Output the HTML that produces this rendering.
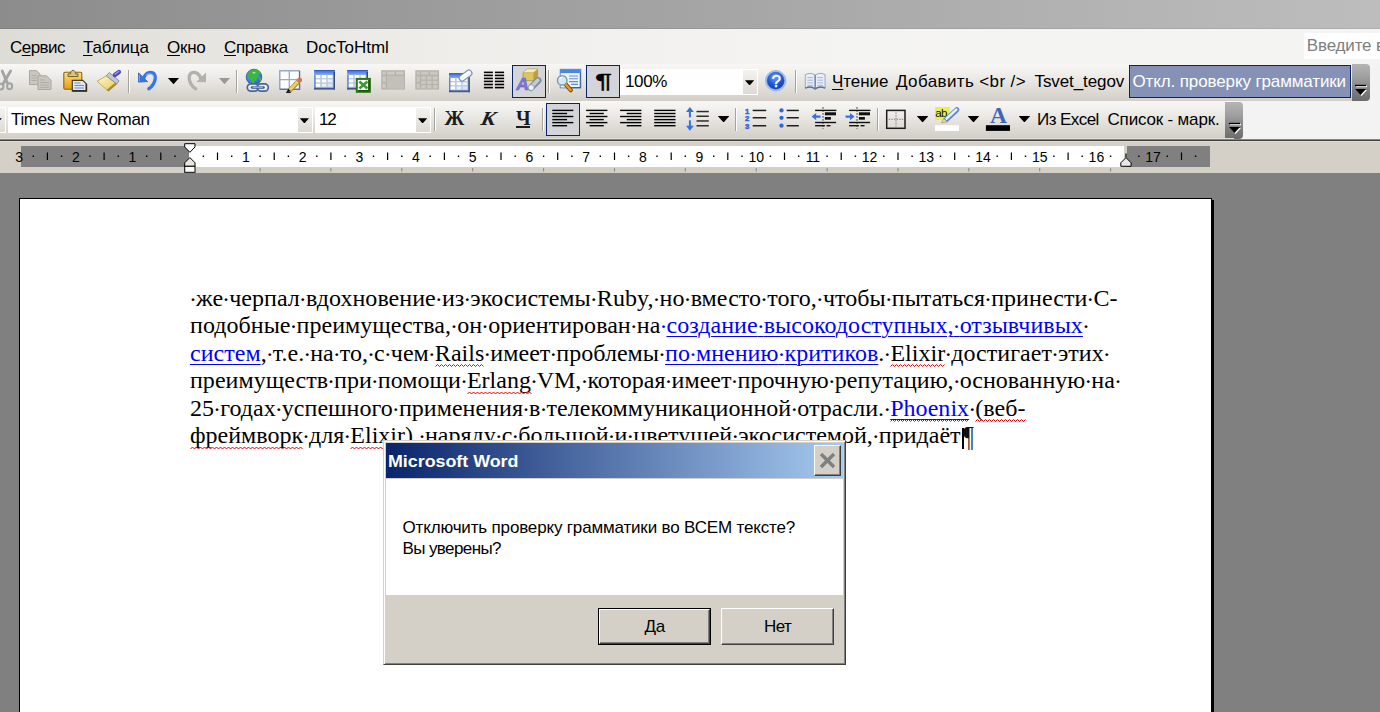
<!DOCTYPE html>
<html lang="ru">
<head>
<meta charset="utf-8">
<title>Microsoft Word</title>
<style>
*{box-sizing:border-box;margin:0;padding:0}
html,body{width:1380px;height:712px;overflow:hidden;background:#808080}
body{position:relative;font-family:"Liberation Sans",sans-serif;font-size:17px;color:#000;line-height:1}
.abs{position:absolute}
.t{position:absolute;white-space:nowrap;line-height:20px;height:20px}
u{text-decoration:underline;text-underline-offset:1.500px;text-decoration-thickness:1px}
#topbar{left:0;top:0;width:1380px;height:29px;background:linear-gradient(180deg,transparent 0 28px,rgba(0,0,0,.08) 28px 29px),linear-gradient(90deg,#8c8c8c 0%,#bdbdbd 100%)}
#menubar{left:0;top:29px;width:1380px;height:35px;background:linear-gradient(90deg,#dedcd6 0%,#e6e4df 14%,#eeedea 32%,#f3f2f0 50%,#f4f4f3 70%,#f4f4f4 100%)}
#tbback{left:0;top:64px;width:1380px;height:75px;background:#f3f3f3}
.tb{background:linear-gradient(180deg,#f8f7f5 0%,#f0efec 25%,#e7e5e1 50%,#dcd9d3 76%,#d3cfc8 100%)}
#tb1{left:0;top:64px;width:1360px;height:37px}
#tb2{left:0;top:101px;width:1234px;height:37px}
.cap{background:linear-gradient(180deg,#b4b4b4 0%,#a0a0a0 35%,#7c7c7c 75%,#6c6c6c 100%);border-radius:0 4px 4px 0}
#sepline{left:0;top:139px;width:1380px;height:3px;background:linear-gradient(180deg,#848484 0 1px,#404040 1px 2px,#dfdcd5 2px 3px)}
#rulerbg{left:0;top:142px;width:1380px;height:31px;background:#d4d0c8}
.sep{position:absolute;width:2px;height:23px;background:linear-gradient(90deg,#a6a39b 0 1px,#fff 1px 2px)}
.selbtn{position:absolute;background:#d4d5d8;border:1px solid #0a246a}
.combo{position:absolute;background:#fff}
.dd{position:absolute;background:linear-gradient(180deg,#f4f3f0,#dddad3);border:1px solid #fff}
.tri{position:absolute;width:11.6px;height:6.5px;background:#000;clip-path:polygon(0 0,100% 0,50% 100%)}
.tri.g{background:#9a9a9a}
.tri.s{width:9.2px;height:5.2px}
/* document */
#page{left:19px;top:198px;width:1193px;height:520px;background:#fff;border:1px solid #000}
#pshadow{left:1212px;top:200px;width:2px;height:520px;background:#000}
.ln{position:absolute;left:190px;white-space:nowrap;font-family:"Liberation Serif",serif;font-size:24px;line-height:28px;height:28px;color:#000}
.ln a{color:#0000ff;text-decoration:underline;text-decoration-thickness:1px;text-underline-offset:3px}
.ln i{font-style:normal;white-space:pre;position:relative}
.ln i::before{content:"·";position:absolute;left:-1px;top:0;letter-spacing:0}
.sq{}
.zz{position:absolute;left:0;top:0;pointer-events:none}
/* dialog */
#dlg{left:383px;top:440px;width:463px;height:225px;background:#d4d0c8;border:1px solid;border-color:#d4d0c8 #404040 #404040 #d4d0c8;box-shadow:inset 1px 1px 0 #fff,inset -1px -1px 0 #808080}
#dtitle{left:2px;top:2px;width:457px;height:34.500px;background:linear-gradient(90deg,#0a246a 0%,#a6caf0 100%)}
#dbody{left:2px;top:37.500px;width:457px;height:116.200px;background:#fff}
.btn{position:absolute;background:#d4d0c8;border:1px solid;border-color:#fff #404040 #404040 #fff;box-shadow:inset -1px -1px 0 #808080;text-align:center}
</style>
</head>
<body>
<div id="topbar" class="abs"></div>
<div id="menubar" class="abs"></div>
<div id="tbback" class="abs"></div>
<div id="tb1" class="abs tb"></div>
<div id="tb2" class="abs tb"></div>
<div class="abs cap" style="left:1351.500px;top:64px;width:18.500px;height:36.500px"></div>
<div class="abs cap" style="left:1225px;top:102px;width:18px;height:36.600px"></div>
<div class="abs" style="left:0;top:138px;width:1234px;height:1px;background:#e0ddd6"></div>
<div id="sepline" class="abs"></div>
<div id="rulerbg" class="abs"></div>
<!-- menu -->
<div class="t" id="m1" style="left:10px;top:38px;letter-spacing:-0.539px">С<u>е</u>рвис</div>
<div class="t" id="m2" style="left:83px;top:38px;letter-spacing:-0.137px"><u>Т</u>аблица</div>
<div class="t" id="m3" style="left:167px;top:38px;letter-spacing:-0.254px"><u>О</u>кно</div>
<div class="t" id="m4" style="left:224px;top:38px;letter-spacing:-0.415px"><u>С</u>правка</div>
<div class="t" id="m5" style="left:306px;top:38px;letter-spacing:-0.037px">DocToHtml</div>
<div class="abs" style="left:1304px;top:33px;width:76px;height:26px;background:#fff"></div>
<div class="t" id="m6" style="left:1306.800px;top:35.700px;color:#808080;letter-spacing:-0.160px">Введите вопрос</div>
<!-- toolbar 1 structure -->
<div class="sep" style="left:128px;top:70px"></div>
<div class="sep" style="left:236px;top:70px"></div>
<div class="sep" style="left:548px;top:70px"></div>
<div class="sep" style="left:795px;top:70px"></div>
<div class="tri" style="left:167.7px;top:77.8px"></div>
<div class="tri g" style="left:218.7px;top:77.8px"></div>
<div class="selbtn" style="left:512px;top:65px;width:34px;height:33px"></div>
<div class="selbtn" style="left:586px;top:65px;width:34px;height:33px"></div>
<div class="t" style="left:594.600px;top:68.500px;font-weight:normal;font-size:21px;line-height:24px;height:24px;transform:scaleX(1.520);transform-origin:0 50%;-webkit-text-stroke:0.350px #000">¶</div>
<div class="combo" style="left:620px;top:69px;width:138px;height:26px"></div>
<div class="dd" style="left:742px;top:69px;width:16px;height:26px"></div>
<div class="tri s" style="left:745px;top:80.2px"></div>
<div class="t" id="z1" style="left:625px;top:72px;letter-spacing:-0.371px">100%</div>
<div class="t" id="b1" style="left:832px;top:72px;letter-spacing:-0.055px"><u>Ч</u>тение</div>
<div class="t" id="b2" style="left:896px;top:72px;letter-spacing:0.381px">Добавить &lt;br /&gt;</div>
<div class="t" id="b3" style="left:1034.5px;top:72px;letter-spacing:-0.093px">Tsvet_tegov</div>
<div class="selbtn" style="left:1129px;top:65px;width:222px;height:33px;background:#8592b5"></div>
<div class="t" id="b4" style="left:1132.5px;top:72px;color:#fff;letter-spacing:-0.121px">Откл. проверку грамматики</div>
<!-- end-cap glyphs -->
<svg class="abs" style="left:1353px;top:84px" width="16" height="14" viewBox="0 0 16 14"><path d="M3 2.5h11" stroke="#fff" stroke-width="1.4"/><path d="M2 1.5h11" stroke="#000" stroke-width="1.4"/><path d="M3 6h11l-5.5 6z" fill="#fff"/><path d="M2 5h11l-5.5 6z" fill="#000"/></svg>
<svg class="abs" style="left:1227px;top:122px" width="16" height="14" viewBox="0 0 16 14"><path d="M3 2.5h11" stroke="#fff" stroke-width="1.4"/><path d="M2 1.5h11" stroke="#000" stroke-width="1.4"/><path d="M3 6h11l-5.5 6z" fill="#fff"/><path d="M2 5h11l-5.5 6z" fill="#000"/></svg>
<!-- toolbar 1 icons -->
<svg class="abs" style="left:0;top:60px" width="1380" height="44" viewBox="0 60 1380 44">
<defs>
<linearGradient id="gGold" x1="0" y1="0" x2="0" y2="1"><stop offset="0" stop-color="#fde27a"/><stop offset="1" stop-color="#e39a12"/></linearGradient>
<linearGradient id="gBl" x1="0" y1="0" x2="0" y2="1"><stop offset="0" stop-color="#7fb0f8"/><stop offset="1" stop-color="#2457c8"/></linearGradient>
<linearGradient id="gHdr" x1="0" y1="0" x2="0" y2="1"><stop offset="0" stop-color="#3a68dc"/><stop offset="0.550" stop-color="#5f8cec"/><stop offset="1" stop-color="#86aaf2"/></linearGradient>
<linearGradient id="gCell" x1="0" y1="0" x2="1" y2="1"><stop offset="0" stop-color="#ffffff"/><stop offset="1" stop-color="#dfeafa"/></linearGradient>
<linearGradient id="gBr" x1="0" y1="0" x2="1" y2="1"><stop offset="0" stop-color="#fffad0"/><stop offset="0.600" stop-color="#f0dc84"/><stop offset="1" stop-color="#d4b450"/></linearGradient>
<radialGradient id="gHelp" cx="0.45" cy="0.3" r="0.8"><stop offset="0" stop-color="#6aa2ff"/><stop offset="0.55" stop-color="#1f55d6"/><stop offset="1" stop-color="#12368f"/></radialGradient>
<radialGradient id="gGlobe" cx="0.4" cy="0.35" r="0.75"><stop offset="0" stop-color="#7db4ff"/><stop offset="1" stop-color="#1f56c0"/></radialGradient>
</defs>
<!-- scissors (disabled) -->
<g stroke="#a3a3a3" fill="none" stroke-linecap="round"><path d="M2.200 71L7.200 82.600" stroke-width="2.800"/><path d="M10.600 71L3 84" stroke-width="2.800"/><ellipse cx="0.800" cy="86.600" rx="2.600" ry="2.900" stroke-width="2.100"/><ellipse cx="9.600" cy="86.200" rx="2.500" ry="3" stroke-width="2.100"/></g>
<!-- copy (disabled) -->
<g stroke="#a9a69f" stroke-width="1" fill="#c9c6bf"><path d="M29.5 70.6h7l3.5 3.5v10.5h-10.5z"/><path d="M38 75.8h8.5l4.5 4.5v9.2h-13z"/></g>
<g stroke="#aeaba4" stroke-width="1"><path d="M31.5 75.5h5M31.5 78h5M31.5 80.5h5M40 82.5h9M40 85h9M40 87.3h9M40 80h5"/></g>
<!-- paste -->
<rect x="63.8" y="72.3" width="18" height="17" rx="1.2" fill="url(#gGold)" stroke="#8a6414" stroke-width="1.1"/>
<path d="M68 76.5v-2.6h2.6c0-2 .9-3.6 2.4-3.6s2.4 1.600 2.400 3.600h2.600v2.600z" fill="#d8c67a" stroke="#7a6424" stroke-width="1"/>
<path d="M72.300 80.300h10.500l3.600 3.600v7h-14.100z" fill="#dde7f6" stroke="#4b3c2c" stroke-width="1.2"/>
<path d="M72.300 90.900h14.100v-7" fill="none" stroke="#3a2c1c" stroke-width="1.600"/>
<path d="M74.500 83h6M74.500 85.500h9.500M74.500 88h9.500" stroke="#6f8fc4" stroke-width="1.100"/>
<!-- format painter -->
<path d="M106.300 75.800L116.800 84L108.400 91.300L97.200 81.200z" fill="url(#gBr)" stroke="#b59a3c" stroke-width="0.800"/>
<path d="M108.400 91.300L116.800 84L115.600 82.600L106.800 89.800z" fill="#a98a2c"/>
<path d="M106.300 75.800L109.300 72.600L119 80.800L116.800 84z" fill="#c4c8d2" stroke="#7f838f" stroke-width="0.800"/>
<path d="M114.800 75L119 72" stroke="#4a4ab8" stroke-width="4.200" stroke-linecap="round"/>
<path d="M115 74.200L118.800 71.500" stroke="#9a9af0" stroke-width="1.400" stroke-linecap="round"/>
<!-- undo -->
<g id="undoA"><path d="M143.600 78.600C144.800 73.400 149.600 71.400 152.600 72.800C156.200 74.600 155.700 80 153.600 83.600C152.300 85.900 150.600 87.800 148.800 88.800" fill="none" stroke-width="3.300" stroke-linecap="round"/><path d="M138.400 72.600V82.300L148 82z" stroke="none"/></g>
<use href="#undoA" stroke="#3874e4" fill="#3874e4"/>
<path d="M146 75.600C148 73.200 153.600 72.800 153.800 78.200" fill="none" stroke="#8fb8f8" stroke-width="1.200"/>
<path d="M139.300 74.500v6.800" stroke="#7aa8f4" stroke-width="1"/>
<!-- redo (disabled) -->
<g transform="translate(344.400 0) scale(-1 1)"><use href="#undoA" stroke="#b3b1ac" fill="#b3b1ac"/></g>
<!-- globe + link -->
<circle cx="254" cy="77" r="7.800" fill="url(#gGlobe)" stroke="#2a58a8" stroke-width="0.800"/>
<path d="M247.600 74c1.400-3.200 5.400-5.200 9.400-4.400c2 .8 3.600 2 4.400 4c-1.600.4-3 .2-3.800 1.800c.6 2-.8 3.400-2.200 4.600c-.6 1.400-1.400 3-3 3.400c-1.200-1.400-.8-3.200-2.200-4.400c-1.600-1.200-3-2.800-2.600-5z" fill="#3cb838"/><path d="M252.300 72.400c1.400-.6 2.800-.4 3.600.6c-1 .6-2.400 1-3.600-.6z" fill="#bfeab8"/>
<path d="M259.800 76.400c1.300.4 1.800 2.600 1.200 4.400c-1.300 1-2.400-2.400-1.200-4.400z" fill="#3cb838"/>
<g fill="#e6ecf5" stroke="#50668e" stroke-width="1.700"><rect x="247.300" y="83.800" width="11" height="7.400" rx="3.600"/><rect x="257.300" y="83.800" width="11" height="7.400" rx="3.600"/></g>
<path d="M252 87.500h11.500" stroke="#3a5788" stroke-width="2.400" stroke-linecap="round"/>
<path d="M252.500 87.200h10.500" stroke="#c9d8ee" stroke-width="0.900"/>
<!-- draw table -->
<rect x="279.800" y="70.800" width="19.600" height="18.400" fill="#fdfeff" stroke="#8c9cba" stroke-width="1.300"/>
<path d="M289.300 70.800v18.400M279.800 79.600h19.600" stroke="#9aa9c6" stroke-width="1.300"/>
<path d="M299.600 71v18.300h-19.600" fill="none" stroke="#5d7096" stroke-width="1.200"/>
<path d="M298.400 81.400L289.800 90.400" stroke="#a88a32" stroke-width="4.600"/>
<path d="M298.200 81.200L289.600 90.200" stroke="#ecd069" stroke-width="2.800"/>
<circle cx="299.500" cy="79.900" r="2.500" fill="#d8705c"/>
<path d="M286.400 92.500l1.800-3.800l2.700 2.600z" fill="#111"/>
<path d="M286.200 92.400h4.600" stroke="#222" stroke-width="1.300"/>
</svg>
<!-- toolbar 1 icons, part 2 -->
<svg class="abs" style="left:300px;top:60px" width="540" height="44" viewBox="300 60 540 44">
<!-- insert table -->
<g id="tblA"><rect x="314.200" y="70.100" width="20.800" height="19.500" fill="#bccae0"/><rect x="314.200" y="70.100" width="20.800" height="4.800" fill="url(#gHdr)"/><rect x="314.200" y="70.100" width="20.800" height="0.900" fill="#3158b8"/>
<rect x="314.200" y="74.900" width="1.500" height="14.700" fill="#5a84d4"/><rect x="333.500" y="72" width="1.500" height="17.600" fill="#2f4a7a"/><rect x="314.200" y="87.700" width="20.800" height="1.900" fill="#405b8a"/>
<g fill="#fff"><rect x="315.800" y="75.100" width="4.400" height="2.900"/><rect x="321.900" y="75.100" width="4.400" height="2.900"/><rect x="327.800" y="75.100" width="4.500" height="2.900"/><rect x="315.800" y="79.400" width="4.400" height="2.900"/><rect x="321.900" y="79.400" width="4.400" height="2.900"/><rect x="327.800" y="79.400" width="4.500" height="2.900" fill="#e8f0fc"/><rect x="315.800" y="83.700" width="4.400" height="3.100"/><rect x="321.900" y="83.700" width="4.400" height="3.100" fill="#e8f0fc"/><rect x="327.800" y="83.700" width="4.500" height="3.100" fill="#d4e4fa"/></g></g>
<!-- excel table -->
<use href="#tblA" x="33"/>
<rect x="356.800" y="78.900" width="13.100" height="12.900" fill="#fff" stroke="#2c7414" stroke-width="2"/>
<path d="M359.400 81.400L367.400 88.400M367.400 81.400L359.400 88.400" stroke="#3f9836" stroke-width="2.700"/><path d="M357.800 90.800h11.100M368.900 80v10.800" stroke="#1f520c" stroke-width="1.600" fill="none"/>
<!-- disabled table 1 -->
<rect x="381.200" y="70.200" width="23.800" height="19.400" fill="#b6b3ac"/>
<g fill="#cdcac3"><rect x="382.600" y="71.600" width="3" height="3"/><rect x="387" y="71.600" width="7.600" height="3"/><rect x="396" y="71.600" width="7.600" height="3"/><rect x="382.600" y="76.400" width="3" height="5.400"/><rect x="382.600" y="83.600" width="3" height="4.600"/><rect x="387" y="76" width="17" height="12.600" fill="#c3c0b9"/></g>
<!-- disabled table 2 -->
<rect x="415.300" y="70.200" width="23.800" height="19.400" fill="#b6b3ac"/>
<g fill="#cbc8c1"><rect x="416.700" y="71.600" width="3" height="3"/><rect x="421.100" y="71.600" width="7.600" height="3"/><rect x="430.100" y="71.600" width="7.600" height="3"/><rect x="416.700" y="76.400" width="3" height="5.400"/><rect x="416.700" y="83.600" width="3" height="4.600"/>
<rect x="421.300" y="76.400" width="4.400" height="3.200"/><rect x="427.100" y="76.400" width="4.400" height="3.200"/><rect x="432.900" y="76.400" width="4.600" height="3.200"/><rect x="421.300" y="80.800" width="4.400" height="3.200"/><rect x="427.100" y="80.800" width="4.400" height="3.200"/><rect x="432.900" y="80.800" width="4.600" height="3.200"/><rect x="421.300" y="85.200" width="4.400" height="3.200"/><rect x="427.100" y="85.200" width="4.400" height="3.200"/><rect x="432.900" y="85.200" width="4.600" height="3.200"/></g>
<!-- table + eraser -->
<g transform="translate(134.800 3.200) scale(1 0.97)" transform-origin="314 70"><use href="#tblA"/></g>
<g transform="rotate(-36 465.500 75.600)"><rect x="458.400" y="72.600" width="14.200" height="6" rx="2.800" fill="#f4f6fa" stroke="#7f93b8" stroke-width="1.200"/><path d="M460 74.300h10.500" stroke="#fff" stroke-width="1.400"/></g>
<!-- columns -->
<g fill="#000"><rect x="483.900" y="71.600" width="9" height="1.600"/><rect x="483.900" y="74.600" width="9" height="1.600"/><rect x="483.900" y="77.600" width="9" height="1.600"/><rect x="483.900" y="80.600" width="9" height="1.600"/><rect x="483.900" y="83.700" width="9" height="1.600"/><rect x="483.900" y="86.800" width="9" height="1.600"/>
<rect x="494.900" y="71.600" width="9.200" height="1.600"/><rect x="494.900" y="74.600" width="9.200" height="1.600"/><rect x="494.900" y="77.600" width="9.200" height="1.600"/><rect x="494.900" y="80.600" width="9.200" height="1.600"/><rect x="494.900" y="83.700" width="9.200" height="1.600"/><rect x="494.900" y="86.800" width="9.200" height="1.600"/></g>
<!-- drawing: cube, cylinder, A -->
<path d="M523 72.600l4-3.600h10.600v8l-4 3.600h-10.600z" fill="#dcc463" stroke="#a88e3a" stroke-width="0.700"/><path d="M533.600 72.600l4-3.600v8l-4 3.600z" fill="#bb9e42"/>
<path d="M523 72.600h10.600l4-3.600M533.600 72.600v8" fill="none" stroke="#c5ad4c" stroke-width="0.900"/>
<path d="M527 69.300h10.300l-3.800 3h-10z" fill="#f6ecae"/>
<path d="M531 87.800L538.200 80.400" stroke="#7f8ba2" stroke-width="6.600" stroke-linecap="round"/>
<path d="M531.200 87L537.800 80.200" stroke="#c3ccda" stroke-width="3.600" stroke-linecap="round"/>
<circle cx="531.200" cy="87.600" r="2.900" fill="#eef2f8" stroke="#8d99ad" stroke-width="0.800"/>
<text x="516.300" y="89.600" font-family="Liberation Sans, sans-serif" font-weight="bold" font-size="17.500" fill="#7c7cda" stroke="#6262c6" stroke-width="0.600" transform="translate(13.500 0) skewX(-9)">A</text>
<!-- document map -->
<rect x="560.200" y="69.300" width="20.600" height="18.600" fill="#eef6ee" stroke="#5f83c6" stroke-width="0.900"/>
<rect x="560.200" y="69.300" width="20.600" height="3.800" fill="#4a86e8"/>
<path d="M580.300 73v14.600h-14" fill="none" stroke="#3f5f9c" stroke-width="1.100"/>
<path d="M569 76h9M569 78.800h9M569 81.600h9M571 84.400h7" stroke="#5c8ede" stroke-width="1.100"/>
<path d="M565.400 84L570.800 90.200" stroke="#7a4e10" stroke-width="4.200" stroke-linecap="round"/>
<path d="M565.600 84.200L570.600 90" stroke="#e79c1e" stroke-width="2.400" stroke-linecap="round"/>
<circle cx="562.200" cy="80.400" r="4.700" fill="#cfeaf8" stroke="#8a97a8" stroke-width="1.500"/>
<path d="M559.600 79.200a3 3 0 0 1 3-2.200" stroke="#fff" stroke-width="1.200" fill="none"/>
<!-- help -->
<circle cx="775.700" cy="80.700" r="10.300" fill="#a9c6f2"/><circle cx="775.700" cy="80.700" r="10.300" fill="none" stroke="#7ea3e0" stroke-width="0.600"/>
<circle cx="775.700" cy="80.700" r="8.500" fill="url(#gHelp)" stroke="#2a55b0" stroke-width="0.600"/>
<text x="776.300" y="86.600" text-anchor="middle" font-family="Liberation Sans, sans-serif" font-size="17" fill="#fff" stroke="#fff" stroke-width="0.500">?</text>
<!-- book -->
<path d="M805.300 74.600c3-1.600 7-1.600 9.900.4v13.600c-2.900-1.800-6.900-1.800-9.900-.4z" fill="#e9eef8" stroke="#8fa0c0" stroke-width="0.900"/>
<path d="M825.100 74.600c-3-1.600-7-1.600-9.900.4v13.600c2.900-1.800 6.900-1.800 9.900-.4z" fill="#e9eef8" stroke="#8fa0c0" stroke-width="0.900"/>
<path d="M805.300 88.200c3-1.400 7-1.400 9.900.6c2.900-2 6.900-2 9.900-.6" fill="none" stroke="#5f7099" stroke-width="1.400"/>
<path d="M807.300 77.600h5.800M807.300 80.200h5.800M807.300 82.800h5.800M807.300 85.300h5.800M817.300 77.600h5.800M817.300 80.200h5.800M817.300 82.800h5.800M817.300 85.300h5.800" stroke="#a8b6d2" stroke-width="1"/>
<path d="M815.200 75v14.400" stroke="#6f80a8" stroke-width="1.200"/>
</svg>
<!-- toolbar 2 structure -->
<div class="dd" style="left:-11.100px;top:107px;width:17px;height:26px"></div>
<div class="tri s" style="left:-7.300px;top:118.200px"></div>
<div class="combo" style="left:8px;top:107px;width:305px;height:26px"></div>
<div class="dd" style="left:297px;top:107px;width:16px;height:26px"></div>
<div class="tri s" style="left:299.8px;top:118.2px"></div>
<div class="t" id="f1" style="left:11px;top:110px;letter-spacing:-0.354px">Times New Roman</div>
<div class="combo" style="left:315px;top:107px;width:116px;height:26px"></div>
<div class="dd" style="left:415px;top:107px;width:16px;height:26px"></div>
<div class="tri s" style="left:418px;top:118.2px"></div>
<div class="t" id="f2" style="left:319px;top:110px;letter-spacing:-1.155px">12</div>
<div class="sep" style="left:434px;top:108px"></div>
<div class="t" style="left:444.500px;top:106.300px;font-family:'Liberation Serif',serif;font-weight:bold;font-size:20px;line-height:24px;height:24px;color:#1c1c1c">Ж</div>
<div class="t" style="left:481.500px;top:106.300px;font-family:'Liberation Serif',serif;font-weight:bold;font-style:italic;font-size:20px;line-height:24px;height:24px;color:#1c1c1c;transform:skewX(-12deg) scaleX(1.080)">К</div>
<div class="t" style="left:516px;top:106.300px;font-family:'Liberation Serif',serif;font-weight:bold;font-size:20px;line-height:24px;height:24px;color:#1c1c1c">Ч</div>
<div class="abs" style="left:516.400px;top:126.400px;width:14px;height:1.400px;background:#1c1c1c"></div>
<div class="sep" style="left:542px;top:108px"></div>
<div class="selbtn" style="left:546px;top:103px;width:34px;height:33px"></div>
<div class="sep" style="left:735px;top:108px"></div>
<div class="sep" style="left:877px;top:108px"></div>
<div class="tri" style="left:717.8px;top:115.9px"></div>
<div class="tri" style="left:916.8px;top:115.9px"></div>
<div class="tri" style="left:967.7px;top:115.9px"></div>
<div class="tri" style="left:1018.6px;top:115.9px"></div>
<div class="t" id="f3" style="left:1037px;top:110px;letter-spacing:-0.564px">Из Excel</div>
<div class="t" id="f4" style="left:1107.5px;top:110px;letter-spacing:-0.174px">Список - марк.</div>
<!-- toolbar 2 icons -->
<svg class="abs" style="left:540px;top:100px" width="480" height="40" viewBox="540 100 480 40">
<!-- align left/center/right/justify -->
<g fill="#000"><rect x="552.3" y="109.7" width="21.0" height="1.4"/><rect x="552.3" y="112.8" width="14.8" height="1.4"/><rect x="552.3" y="115.8" width="21.0" height="1.4"/><rect x="552.3" y="118.9" width="14.8" height="1.4"/><rect x="552.3" y="121.9" width="21.0" height="1.4"/><rect x="552.3" y="125.0" width="14.8" height="1.4"/></g>
<g fill="#000"><rect x="586.1" y="109.7" width="21.3" height="1.4"/><rect x="589.6" y="112.8" width="14.2" height="1.4"/><rect x="586.1" y="115.8" width="21.3" height="1.4"/><rect x="589.6" y="118.9" width="14.2" height="1.4"/><rect x="586.1" y="121.9" width="21.3" height="1.4"/><rect x="589.6" y="125.0" width="14.2" height="1.4"/></g>
<g fill="#000"><rect x="620.1" y="109.7" width="21.3" height="1.4"/><rect x="626.7" y="112.8" width="14.7" height="1.4"/><rect x="620.1" y="115.8" width="21.3" height="1.4"/><rect x="626.7" y="118.9" width="14.7" height="1.4"/><rect x="620.1" y="121.9" width="21.3" height="1.4"/><rect x="626.7" y="125.0" width="14.7" height="1.4"/></g>
<g fill="#000"><rect x="654.2" y="109.7" width="21.3" height="1.4"/><rect x="654.2" y="112.8" width="21.3" height="1.4"/><rect x="654.2" y="115.8" width="21.3" height="1.4"/><rect x="654.2" y="118.9" width="21.3" height="1.4"/><rect x="654.2" y="121.9" width="21.3" height="1.4"/><rect x="654.2" y="125.0" width="21.3" height="1.4"/></g>
<!-- line spacing -->
<g fill="#3a70dc"><rect x="688.900" y="110" width="2" height="7.400"/><path d="M686 112l3.900-5l3.900 5z"/><rect x="688.900" y="120.300" width="2" height="7.400"/><path d="M686 125.700l3.900 5l3.900-5z"/></g>
<g fill="#2e2e2e"><rect x="696.5" y="110.8" width="12.3" height="1.5"/><rect x="696.5" y="115.5" width="12.3" height="1.5"/><rect x="696.5" y="120.2" width="12.3" height="1.5"/><rect x="696.5" y="125.0" width="12.3" height="1.5"/></g>
<!-- numbered list -->
<g font-family="Liberation Sans, sans-serif" font-weight="bold" font-size="7.800" fill="#2f66d6" stroke="#2f66d6" stroke-width="0.450"><text x="744.900" y="113.800">1</text><text x="744.900" y="121.200">2</text><text x="744.900" y="128.900">3</text></g>
<g fill="#1e1e1e"><rect x="752.7" y="109.7" width="13.5" height="1.5"/><rect x="752.7" y="117.0" width="13.5" height="1.5"/><rect x="752.7" y="125.0" width="13.5" height="1.5"/></g>
<!-- bulleted list -->
<g fill="#2f66d6"><circle cx="781.500" cy="110.400" r="2.150"/><circle cx="781.500" cy="117.800" r="2.150"/><circle cx="781.500" cy="125.700" r="2.150"/></g>
<g fill="#1e1e1e"><rect x="786.7" y="109.7" width="12.1" height="1.5"/><rect x="786.7" y="117.0" width="12.1" height="1.5"/><rect x="786.7" y="125.0" width="12.1" height="1.5"/></g>
<!-- decrease / increase indent -->
<g transform="translate(0 0)"><path d="M823 107.200v21.600" stroke="#222" stroke-width="1" stroke-dasharray="1.500 1.500"/><g fill="#111"><rect x="815.100" y="109.700" width="21.300" height="1.400"/><rect x="824.900" y="112.300" width="11.100" height="3"/><rect x="824.900" y="117" width="6" height="2.700"/><rect x="815.100" y="121.800" width="21" height="1.400"/><rect x="815.100" y="125" width="9.800" height="1.400"/><rect x="826.500" y="125" width="4" height="1.400"/></g><path d="M811.600 116.600l4.600-3.600v2.400h4.400v2.400h-4.400v2.400z" fill="#3a70dc"/></g>
<g transform="translate(34 0)"><path d="M823 107.200v21.600" stroke="#222" stroke-width="1" stroke-dasharray="1.500 1.500"/><g fill="#111"><rect x="815.100" y="109.700" width="21.300" height="1.400"/><rect x="824.900" y="112.300" width="11.100" height="3"/><rect x="824.900" y="117" width="6" height="2.700"/><rect x="815.100" y="121.800" width="21" height="1.400"/><rect x="815.100" y="125" width="9.800" height="1.400"/><rect x="826.500" y="125" width="4" height="1.400"/></g><path d="M820.600 116.600l-4.600-3.600v2.400h-4.400v2.400h4.400v2.400z" fill="#3a70dc"/></g>
<!-- borders -->
<rect x="886.700" y="110.400" width="18.300" height="17.900" fill="none" stroke="#1c1c1c" stroke-width="1.500"/>
<path d="M896 112.500v14M888.800 119.300h14.400" stroke="#777" stroke-width="1" stroke-dasharray="1.300 1.300"/>
<!-- highlight -->
<rect x="935" y="107" width="14.800" height="13" fill="#e6ee58"/>
<text x="935.200" y="116.600" font-family="Liberation Sans, sans-serif" font-size="11.500" fill="#111" letter-spacing="-0.500">ab</text>
<path d="M956.800 109.800L946.400 119.400" stroke="#5f86cc" stroke-width="5.200" stroke-linecap="round"/>
<path d="M956.300 109.600L946.600 118.500" stroke="#e6eefa" stroke-width="2.600" stroke-linecap="round"/>
<path d="M941.500 122.800l2.200-4.300l3.700 3.300z" fill="#e9d9a2" stroke="#9b8a55" stroke-width="0.600"/>
<rect x="935" y="125.200" width="24" height="5.700" fill="#fff"/>
<!-- font color -->
<text x="998.500" y="123.200" text-anchor="middle" font-family="Liberation Serif, serif" font-weight="bold" font-size="23.500" fill="#3f66b6">A</text>
<rect x="985.900" y="125.200" width="24.100" height="5.700" fill="#000"/>
</svg>
<!-- ruler -->
<div class="abs" style="left:21px;top:146px;width:167.5px;height:20.700px;background:#808080"></div>
<div class="abs" style="left:188.5px;top:146px;width:935.5px;height:20.700px;background:#fff"></div>
<div class="abs" style="left:1127px;top:146px;width:83px;height:20.700px;background:#808080"></div>
<svg class="abs" style="left:0;top:141px" width="1380" height="32" viewBox="0 0 1380 32" font-family="Liberation Sans, sans-serif" font-size="14" fill="#000">
<rect x="46.8" y="11.5" width="1.2" height="7.5"/>
<rect x="103.5" y="11.5" width="1.2" height="7.5"/>
<rect x="160.2" y="11.5" width="1.2" height="7.5"/>
<rect x="216.9" y="11.5" width="1.2" height="7.5"/>
<rect x="273.6" y="11.5" width="1.2" height="7.5"/>
<rect x="330.3" y="11.5" width="1.2" height="7.5"/>
<rect x="387.0" y="11.5" width="1.2" height="7.5"/>
<rect x="443.8" y="11.5" width="1.2" height="7.5"/>
<rect x="500.4" y="11.5" width="1.2" height="7.5"/>
<rect x="557.1" y="11.5" width="1.2" height="7.5"/>
<rect x="613.9" y="11.5" width="1.2" height="7.5"/>
<rect x="670.6" y="11.5" width="1.2" height="7.5"/>
<rect x="727.2" y="11.5" width="1.2" height="7.5"/>
<rect x="783.9" y="11.5" width="1.2" height="7.5"/>
<rect x="840.6" y="11.5" width="1.2" height="7.5"/>
<rect x="897.4" y="11.5" width="1.2" height="7.5"/>
<rect x="954.1" y="11.5" width="1.2" height="7.5"/>
<rect x="1010.8" y="11.5" width="1.2" height="7.5"/>
<rect x="1067.5" y="11.5" width="1.2" height="7.5"/>
<rect x="1180.9" y="11.5" width="1.2" height="7.5"/>
<rect x="32.6" y="14.5" width="1.4" height="1.5"/>
<rect x="60.9" y="14.5" width="1.4" height="1.5"/>
<rect x="89.3" y="14.5" width="1.4" height="1.5"/>
<rect x="117.6" y="14.5" width="1.4" height="1.5"/>
<rect x="146.0" y="14.5" width="1.4" height="1.5"/>
<rect x="174.3" y="14.5" width="1.4" height="1.5"/>
<rect x="202.7" y="14.5" width="1.4" height="1.5"/>
<rect x="231.0" y="14.5" width="1.4" height="1.5"/>
<rect x="259.4" y="14.5" width="1.4" height="1.5"/>
<rect x="287.7" y="14.5" width="1.4" height="1.5"/>
<rect x="316.1" y="14.5" width="1.4" height="1.5"/>
<rect x="344.4" y="14.5" width="1.4" height="1.5"/>
<rect x="372.8" y="14.5" width="1.4" height="1.5"/>
<rect x="401.1" y="14.5" width="1.4" height="1.5"/>
<rect x="429.5" y="14.5" width="1.4" height="1.5"/>
<rect x="457.8" y="14.5" width="1.4" height="1.5"/>
<rect x="486.2" y="14.5" width="1.4" height="1.5"/>
<rect x="514.5" y="14.5" width="1.4" height="1.5"/>
<rect x="542.9" y="14.5" width="1.4" height="1.5"/>
<rect x="571.2" y="14.5" width="1.4" height="1.5"/>
<rect x="599.6" y="14.5" width="1.4" height="1.5"/>
<rect x="627.9" y="14.5" width="1.4" height="1.5"/>
<rect x="656.3" y="14.5" width="1.4" height="1.5"/>
<rect x="684.6" y="14.5" width="1.4" height="1.5"/>
<rect x="713.0" y="14.5" width="1.4" height="1.5"/>
<rect x="741.3" y="14.5" width="1.4" height="1.5"/>
<rect x="769.7" y="14.5" width="1.4" height="1.5"/>
<rect x="798.0" y="14.5" width="1.4" height="1.5"/>
<rect x="826.4" y="14.5" width="1.4" height="1.5"/>
<rect x="854.7" y="14.5" width="1.4" height="1.5"/>
<rect x="883.1" y="14.5" width="1.4" height="1.5"/>
<rect x="911.4" y="14.5" width="1.4" height="1.5"/>
<rect x="939.8" y="14.5" width="1.4" height="1.5"/>
<rect x="968.1" y="14.5" width="1.4" height="1.5"/>
<rect x="996.5" y="14.5" width="1.4" height="1.5"/>
<rect x="1024.8" y="14.5" width="1.4" height="1.5"/>
<rect x="1053.2" y="14.5" width="1.4" height="1.5"/>
<rect x="1081.5" y="14.5" width="1.4" height="1.5"/>
<rect x="1109.9" y="14.5" width="1.4" height="1.5"/>
<rect x="1138.2" y="14.5" width="1.4" height="1.5"/>
<rect x="1166.6" y="14.5" width="1.4" height="1.5"/>
<rect x="1194.9" y="14.5" width="1.4" height="1.5"/>
<text x="19.100" y="20.600" text-anchor="middle">3</text><text x="75.8" y="20.6" text-anchor="middle">2</text>
<text x="132.5" y="20.6" text-anchor="middle">1</text>
<text x="245.9" y="20.6" text-anchor="middle">1</text>
<text x="302.6" y="20.6" text-anchor="middle">2</text>
<text x="359.3" y="20.6" text-anchor="middle">3</text>
<text x="416.0" y="20.6" text-anchor="middle">4</text>
<text x="472.7" y="20.6" text-anchor="middle">5</text>
<text x="529.4" y="20.6" text-anchor="middle">6</text>
<text x="586.1" y="20.6" text-anchor="middle">7</text>
<text x="642.8" y="20.6" text-anchor="middle">8</text>
<text x="699.5" y="20.6" text-anchor="middle">9</text>
<text x="756.2" y="20.6" text-anchor="middle">10</text>
<text x="812.9" y="20.6" text-anchor="middle">11</text>
<text x="869.6" y="20.6" text-anchor="middle">12</text>
<text x="926.3" y="20.6" text-anchor="middle">13</text>
<text x="983.0" y="20.6" text-anchor="middle">14</text>
<text x="1039.7" y="20.6" text-anchor="middle">15</text>
<text x="1096.4" y="20.6" text-anchor="middle">16</text>
<text x="1153.1" y="20.6" text-anchor="middle">17</text>
<rect x="259.6" y="27" width="1" height="3.5" fill="#8a8880"/>
<rect x="330.4" y="27" width="1" height="3.5" fill="#8a8880"/>
<rect x="401.3" y="27" width="1" height="3.5" fill="#8a8880"/>
<rect x="472.2" y="27" width="1" height="3.5" fill="#8a8880"/>
<rect x="543.1" y="27" width="1" height="3.5" fill="#8a8880"/>
<rect x="614.0" y="27" width="1" height="3.5" fill="#8a8880"/>
<rect x="684.8" y="27" width="1" height="3.5" fill="#8a8880"/>
<rect x="755.7" y="27" width="1" height="3.5" fill="#8a8880"/>
<rect x="826.6" y="27" width="1" height="3.5" fill="#8a8880"/>
<rect x="897.5" y="27" width="1" height="3.5" fill="#8a8880"/>
<rect x="968.3" y="27" width="1" height="3.5" fill="#8a8880"/>
<rect x="1039.2" y="27" width="1" height="3.5" fill="#8a8880"/>
<rect x="1110.1" y="27" width="1" height="3.5" fill="#8a8880"/>
<path d="M184.7 2.7h10.3v3.3l-5.1 5.3l-5.2-5.3z" fill="#fff" stroke="#000" stroke-width="1"/>
<path d="M184.7 25.3v-3.5l5.2-5.2l5.1 5.2v3.5z" fill="#e8e6e0" stroke="#000" stroke-width="1"/>
<rect x="184.7" y="25.3" width="10.3" height="6" fill="#fff" stroke="#000" stroke-width="1"/>
<path d="M1120.8 25.3v-3.5l5.2-5.2l5.1 5.2v3.5z" fill="#e8e6e0" stroke="#000" stroke-width="1"/>
<path d="M1126 12.5v4" stroke="#000" stroke-width="1.2"/>
</svg>
<!-- document -->
<div id="page" class="abs"></div>
<div id="pshadow" class="abs"></div>
<div class="ln" id="L1" style="top:283.5px;letter-spacing:0.048px"><i> </i>же<i> </i>черпал<i> </i>вдохновение<i> </i>из<i> </i>экосистемы<i> </i>Ruby,<i> </i>но<i> </i>вместо<i> </i>того,<i> </i>чтобы<i> </i>пытаться<i> </i>принести<i> </i>С-</div>
<div class="ln" id="L2" style="top:311px;letter-spacing:0.037px">подобные<i> </i>преимущества,<i> </i>он<i> </i>ориентирован<i> </i>на<i style="color:#00f"> </i><a>создание<i> </i>высокодоступных,<i> </i>отзывчивых</a><i> </i></div>
<div class="ln" id="L3" style="top:338.5px;letter-spacing:0.028px"><a>систем</a>,<i> </i>т.е.<i> </i>на<i> </i>то,<i> </i>с<i> </i>чем<i> </i><span class="sq">Rails</span><i> </i>имеет<i> </i>проблемы<i> </i><a>по<i> </i>мнению<i> </i>критиков</a>.<i> </i><span class="sq">Elixir</span><i> </i>достигает<i> </i>этих<i> </i></div>
<div class="ln" id="L4" style="top:366px;letter-spacing:0.024px">преимуществ<i> </i>при<i> </i>помощи<i> </i><span class="sq">Erlang</span><i> </i>VM,<i> </i>которая<i> </i>имеет<i> </i>прочную<i> </i>репутацию,<i> </i>основанную<i> </i>на<i> </i></div>
<div class="ln" id="L5" style="top:393.5px;letter-spacing:0.037px">25<i> </i>годах<i> </i>успешного<i> </i>применения<i> </i>в<i> </i>телекоммуникационной<i> </i>отрасли.<i> </i><a class="sq">Phoenix</a><i> </i><span class="sq">(веб-</span></div>
<div class="ln" id="L6" style="top:421px"><span class="sq">фреймворк</span><i> </i>для<i> </i><span class="sq">Elixir</span>),<i> </i>наряду<i> </i>с<i> </i>большой<i> </i>и<i> </i>цветущей<i> </i>экосистемой,<i> </i>придаёт<span style="letter-spacing:0;color:#111;display:inline-block;margin-left:2.5px;transform:scaleY(1.2);transform-origin:50% 22%">¶</span></div>
<div class="abs" style="left:962px;top:428px;width:2px;height:21px;background:#000"></div>
<!-- spelling squiggles -->
<svg class="zz" width="1380" height="712" viewBox="0 0 1380 712"><path d="M435.5 366.5L437.5 364.5L439.5 366.5L441.5 364.5L443.5 366.5L445.5 364.5L447.5 366.5L449.5 364.5L451.5 366.5L453.5 364.5L455.5 366.5L457.5 364.5L459.5 366.5L461.5 364.5L463.5 366.5L465.5 364.5L467.5 366.5L469.5 364.5L471.5 366.5L473.5 364.5L475.5 366.5L477.5 364.5L479.5 366.5L481.5 364.5L483.5 366.5 M890.5 366.5L892.5 364.5L894.5 366.5L896.5 364.5L898.5 366.5L900.5 364.5L902.5 366.5L904.5 364.5L906.5 366.5L908.5 364.5L910.5 366.5L912.5 364.5L914.5 366.5L916.5 364.5L918.5 366.5L920.5 364.5L922.5 366.5L924.5 364.5L926.5 366.5L928.5 364.5L930.5 366.5L932.5 364.5L934.5 366.5L936.5 364.5L938.5 366.5L940.5 364.5L942.5 366.5L944.5 364.5 M467.5 394.0L469.5 392.0L471.5 394.0L473.5 392.0L475.5 394.0L477.5 392.0L479.5 394.0L481.5 392.0L483.5 394.0L485.5 392.0L487.5 394.0L489.5 392.0L491.5 394.0L493.5 392.0L495.5 394.0L497.5 392.0L499.5 394.0L501.5 392.0L503.5 394.0L505.5 392.0L507.5 394.0L509.5 392.0L511.5 394.0L513.5 392.0L515.5 394.0L517.5 392.0L519.5 394.0L521.5 392.0L523.5 394.0L525.5 392.0L527.5 394.0L529.5 392.0L531.5 394.0 M890.5 421.5L892.5 419.5L894.5 421.5L896.5 419.5L898.5 421.5L900.5 419.5L902.5 421.5L904.5 419.5L906.5 421.5L908.5 419.5L910.5 421.5L912.5 419.5L914.5 421.5L916.5 419.5L918.5 421.5L920.5 419.5L922.5 421.5L924.5 419.5L926.5 421.5L928.5 419.5L930.5 421.5L932.5 419.5L934.5 421.5L936.5 419.5L938.5 421.5L940.5 419.5L942.5 421.5L944.5 419.5L946.5 421.5L948.5 419.5L950.5 421.5L952.5 419.5L954.5 421.5L956.5 419.5L958.5 421.5L960.5 419.5L962.5 421.5L964.5 419.5L966.5 421.5L968.5 419.5 M975.5 421.5L977.5 419.5L979.5 421.5L981.5 419.5L983.5 421.5L985.5 419.5L987.5 421.5L989.5 419.5L991.5 421.5L993.5 419.5L995.5 421.5L997.5 419.5L999.5 421.5L1001.5 419.5L1003.5 421.5L1005.5 419.5L1007.5 421.5L1009.5 419.5L1011.5 421.5L1013.5 419.5L1015.5 421.5L1017.5 419.5L1019.5 421.5L1021.5 419.5L1023.5 421.5L1025.5 419.5 M190.5 449.0L192.5 447.0L194.5 449.0L196.5 447.0L198.5 449.0L200.5 447.0L202.5 449.0L204.5 447.0L206.5 449.0L208.5 447.0L210.5 449.0L212.5 447.0L214.5 449.0L216.5 447.0L218.5 449.0L220.5 447.0L222.5 449.0L224.5 447.0L226.5 449.0L228.5 447.0L230.5 449.0L232.5 447.0L234.5 449.0L236.5 447.0L238.5 449.0L240.5 447.0L242.5 449.0L244.5 447.0L246.5 449.0L248.5 447.0L250.5 449.0L252.5 447.0L254.5 449.0L256.5 447.0L258.5 449.0L260.5 447.0L262.5 449.0L264.5 447.0L266.5 449.0L268.5 447.0L270.5 449.0L272.5 447.0L274.5 449.0L276.5 447.0L278.5 449.0L280.5 447.0L282.5 449.0L284.5 447.0L286.5 449.0L288.5 447.0L290.5 449.0L292.5 447.0L294.5 449.0L296.5 447.0L298.5 449.0L300.5 447.0L302.5 449.0 M350.5 449.0L352.5 447.0L354.5 449.0L356.5 447.0L358.5 449.0L360.5 447.0L362.5 449.0L364.5 447.0L366.5 449.0L368.5 447.0L370.5 449.0L372.5 447.0L374.5 449.0L376.5 447.0L378.5 449.0L380.5 447.0L382.5 449.0L384.5 447.0L386.5 449.0L388.5 447.0L390.5 449.0L392.5 447.0L394.5 449.0L396.5 447.0L398.5 449.0L400.5 447.0L402.5 449.0L404.5 447.0" fill="none" stroke="#f00000" stroke-width="1"/></svg>
<!-- dialog -->
<div id="dlg" class="abs">
<div id="dtitle" class="abs"></div>
<div class="t" id="d0" style="left:3.900px;top:10px;color:#fff;font-weight:bold;font-size:16.500px;transform:scaleX(1.082);transform-origin:0 50%;letter-spacing:-0.013px">Microsoft Word</div>
<div class="btn" style="left:430px;top:4px;width:27px;height:31px;border-color:#fff #404040 #404040 #fff"></div>
<svg class="abs" style="left:435.200px;top:10.800px" width="17" height="17" viewBox="0 0 17 17"><path d="M2 2l13 13M15 2L2 15" stroke="#808080" stroke-width="3.500" fill="none"/></svg>
<div id="dbody" class="abs"></div>
<div class="t" id="d1" style="left:18.5px;top:77px;letter-spacing:-0.161px">Отключить проверку грамматики во ВСЕМ тексте?</div>
<div class="t" id="d2" style="left:18.5px;top:97.600px;letter-spacing:-0.606px">Вы уверены?</div>
<div class="abs" style="left:214px;top:167px;width:113px;height:37px;background:#000"></div>
<div class="btn" style="left:215px;top:168px;width:111px;height:35px"></div>
<div class="btn" style="left:337px;top:167px;width:113px;height:37px"></div>
<div class="t" id="d3" style="left:260.5px;top:176px;letter-spacing:-0.388px">Да</div>
<div class="t" id="d4" style="left:380px;top:176px;letter-spacing:-0.522px">Нет</div>
</div>
</body>
</html>
